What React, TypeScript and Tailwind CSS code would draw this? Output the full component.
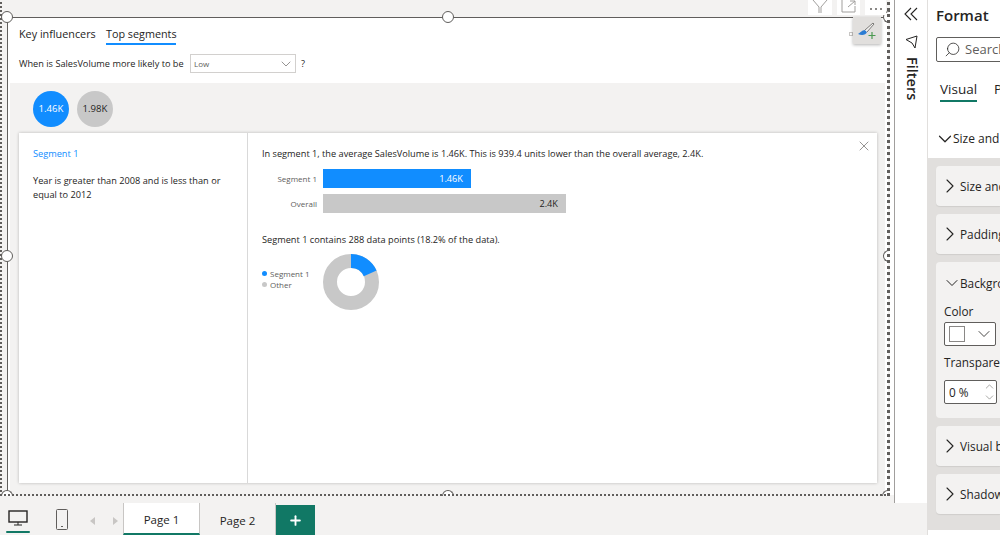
import { ChevronDown, ChevronRight, ChevronUp, X, Search, Plus } from 'lucide-react';

const handleClass = 'absolute h-[12px] w-[12px] rounded-full border border-[#605e5c] bg-white';
const rightHandleClass = 'absolute left-[883px] h-[12px] w-[7px] rounded-l-full border border-r-0 border-[#605e5c] bg-white';
const bottomHandleClass = 'absolute top-[490px] h-[6px] w-[12px] rounded-t-full border border-b-0 border-[#605e5c] bg-white';

function FormatCard({ title }: { title: string }) {
  return (
    <div className="flex h-[40px] shrink-0 items-center rounded-l-[4px] bg-[#f3f2f1] pl-[2px] shadow-[0_1px_1px_rgba(0,0,0,0.08)]">
      <ChevronRight size={24} strokeWidth={1.1} className="-mr-[2px] shrink-0 text-[#252423]" />
      <span className="whitespace-nowrap pt-[1px] text-[11.8px] text-[#252423]">{title}</span>
    </div>
  );
}

export default function App() {
  return (
    <div className="flex h-[535px] w-[1000px] overflow-hidden bg-white font-['Open_Sans',sans-serif] text-[#252423]">
      <div className="flex w-[927px] shrink-0 flex-col">
        <div className="flex h-[503px]">
          {/* report canvas */}
          <div className="relative w-[894px] shrink-0 bg-[#f3f2f1] pl-[7px] pt-[17px]">
            <div className="flex h-[478px] w-[881px] flex-col border-l border-t border-[#605e5c] bg-white">
              <div className="h-[65px] shrink-0 pl-[11px]">
                <div className="flex h-[27px] items-end text-[10.8px]">
                  <div className="h-[26px] w-[87px] whitespace-nowrap pt-[7px] leading-[16px]">Key influencers</div>
                  <div className="h-[26px] w-[70px] whitespace-nowrap border-b-2 border-[#118dff] pt-[7px] leading-[16px]">Top segments</div>
                </div>
                <div className="mt-[9px] flex h-[19px] items-center text-[9.2px]">
                  <span className="w-[171px] whitespace-nowrap">When is SalesVolume more likely to be</span>
                  <div className="flex h-[19px] w-[106px] items-center justify-between border border-[#d2d0ce] pl-[3px] pr-[1px] text-[8px] text-[#605e5c]">
                    Low
                    <ChevronDown size={16} strokeWidth={1} className="text-[#605e5c]" />
                  </div>
                  <span className="ml-[5px]">?</span>
                </div>
              </div>
              <div className="ml-[2px] flex w-[875px] flex-1 flex-col bg-[#f3f2f1] pl-[9px]">
                <div className="flex h-[50px] shrink-0 items-start gap-[8px] pl-[14px] pt-[8px] text-[9.6px]">
                  <div className="flex h-[36px] w-[36px] items-center justify-center rounded-full bg-[#118dff] text-white">1.46K</div>
                  <div className="flex h-[36px] w-[36px] items-center justify-center rounded-full bg-[#c8c8c8]">1.98K</div>
                </div>
                <div className="relative flex h-[350px] w-[858px] bg-white shadow-[0_0_3px_rgba(0,0,0,0.25)]">
                  <div className="w-[229px] shrink-0 border-r border-[#d9d9d9] pl-[14px] pr-[8px] pt-[14px] text-[9.2px] leading-[14px]">
                    <div className="text-[#118dff]">Segment 1</div>
                    <div className="mt-[13px]">Year is greater than 2008 and is less than or equal to 2012</div>
                  </div>
                  <div className="flex-1 pl-[14px] pt-[14px] text-[9.2px] leading-[14px]">
                    <div className="whitespace-nowrap">In segment 1, the average SalesVolume is 1.46K. This is 939.4 units lower than the overall average, 2.4K.</div>
                    <div className="mt-[8px] flex flex-col gap-[6px]">
                      <div className="flex h-[19px] items-center">
                        <span className="w-[56px] pr-[1px] text-right text-[8px] text-[#605e5c]">Segment 1</span>
                        <div className="ml-[5px] flex h-[19px] w-[148px] items-center justify-end bg-[#118dff] pr-[8px] text-white">1.46K</div>
                      </div>
                      <div className="flex h-[19px] items-center">
                        <span className="w-[56px] pr-[1px] text-right text-[8px] text-[#605e5c]">Overall</span>
                        <div className="ml-[5px] flex h-[19px] w-[243px] items-center justify-end bg-[#c8c8c8] pr-[8px]">2.4K</div>
                      </div>
                    </div>
                    <div className="mt-[20px] whitespace-nowrap">Segment 1 contains 288 data points (18.2% of the data).</div>
                    <div className="mt-[7px] flex items-start">
                      <div className="w-[61px] pt-[14px] text-[8px] leading-[11px] text-[#605e5c]">
                        <div className="flex items-center gap-[3px]"><span className="h-[5px] w-[5px] rounded-full bg-[#118dff]" />Segment 1</div>
                        <div className="flex items-center gap-[3px]"><span className="h-[5px] w-[5px] rounded-full bg-[#c8c8c8]" />Other</div>
                      </div>
                      <svg width="56" height="56" viewBox="0 0 56 56">
                        <circle cx="28" cy="28" r="21" fill="none" stroke="#c8c8c8" strokeWidth="14" />
                        <circle cx="28" cy="28" r="21" fill="none" stroke="#118dff" strokeWidth="14" strokeDasharray="24 108" transform="rotate(-90 28 28)" />
                      </svg>
                    </div>
                  </div>
                  <X size={16} strokeWidth={1} className="absolute right-[5px] top-[5px] text-[#605e5c]" />
                </div>
              </div>
            </div>

            {/* selection frame and visual header, sits over the visual */}
            <div className="absolute bottom-[8px] right-0 top-0 w-[4px] bg-white" />
            <div className={`${handleClass} left-[1px] top-[11px]`} />
            <div className={`${handleClass} left-[442px] top-[11px]`} />
            <div className={`${rightHandleClass} top-[11px]`} />
            <div className={`${handleClass} left-[1px] top-[250px]`} />
            <div className={`${rightHandleClass} top-[250px]`} />
            <div className={`${bottomHandleClass} left-[1px]`} />
            <div className={`${bottomHandleClass} left-[442px]`} />
            <div className="absolute left-[882px] top-[490px] h-[6px] w-[8px] rounded-tl-full border-l border-t border-[#605e5c] bg-white" />
            <div className="absolute left-0 top-[-3px] h-[499px] w-[890px] border-2 border-r-[3px] border-dotted border-[#605e5c]" />

            <div className="absolute left-[808px] top-0 flex h-[15px] gap-[5px]">
              <div className="flex w-[24px] justify-center bg-white">
                <svg width="16" height="13" viewBox="0 0 16 13" fill="none" stroke="#a19f9d"><path d="M1 0 L7 7 V13 M15 0 L9 7 V13" /></svg>
              </div>
              <div className="flex w-[23px] justify-center bg-white">
                <svg width="15" height="13" viewBox="0 0 15 13" fill="none" stroke="#a19f9d"><path d="M1 0 V12 H14 V6 M7 7 L14 1 M9 1 H14 V5" /></svg>
              </div>
              <div className="flex w-[21px] items-center justify-center gap-[3px] bg-white pt-[2px]">
                <span className="h-[2px] w-[2px] bg-[#8a8886]" />
                <span className="h-[2px] w-[2px] bg-[#8a8886]" />
                <span className="h-[2px] w-[2px] bg-[#8a8886]" />
              </div>
            </div>
            <div className="absolute left-[849px] top-[32px] h-[4px] w-[4px] border border-[#c8c6c4] bg-white" />
            <div className="absolute left-[853px] top-[17px] flex h-[27px] w-[28px] items-center justify-center bg-[#e1dfdd] shadow-[0_1px_3px_rgba(0,0,0,0.3)]">
              <svg width="20" height="18" viewBox="0 0 20 18" fill="none">
                <path d="M1 12 C3 11 5 8 8 8 L10 10 C9 13 5 14 1 12 Z" fill="#2b7cd3" />
                <path d="M8 8 L16 1 L17 2 L10 10" fill="#f3f2f1" stroke="#605e5c" strokeWidth="0.8" />
                <path d="M15 10 V17 M11.5 13.5 H18.5" stroke="#4c9a52" strokeWidth="1.2" />
              </svg>
            </div>
          </div>

          {/* filters rail */}
          <div className="flex flex-1 flex-col items-center border-l border-[#a19f9d] bg-white pt-[7px]">
            <svg width="14" height="14" viewBox="0 0 14 14" fill="none" stroke="#252423" strokeWidth="1.1"><path d="M7 1 L1 7 L7 13 M13 1 L7 7 L13 13" /></svg>
            <svg className="ml-[1px] mt-[14px]" width="13" height="14" viewBox="0 0 13 14" fill="none" stroke="#252423"><path d="M12 1 L1 4.5 L7 8 L10 13 Z" /></svg>
            <div className="ml-[1px] mt-[8px] text-[14.5px] font-semibold leading-[16px] [writing-mode:vertical-rl]">Filters</div>
          </div>
        </div>

        {/* page tabs */}
        <div className="flex h-[32px] items-end bg-[#f3f2f1]">
          <div className="flex h-[32px] w-[36px] flex-col items-center justify-between pt-[6px]">
            <svg width="20" height="17" viewBox="0 0 20 17" fill="none"><rect x="1" y="2" width="18" height="11" stroke="#252423" strokeWidth="1.4" /><path d="M10 13 V16 M6 16 H14" stroke="#252423" /></svg>
            <div className="mb-[2px] h-[2px] w-[24px] rounded-full bg-[#117865]" />
          </div>
          <div className="flex h-[32px] w-[44px] items-center justify-center pl-[8px]">
            <svg width="14" height="21" viewBox="0 0 14 21" fill="none"><rect x="1.5" y="0.5" width="11" height="20" rx="1" stroke="#605e5c" /><path d="M6 17.5 H8" stroke="#605e5c" /></svg>
          </div>
          <div className="flex h-[32px] w-[43px] items-center justify-center gap-[16px] pl-[4px] pt-[4px]">
            <svg width="6" height="8" viewBox="0 0 6 8" fill="#c8c6c4"><path d="M5 0 L0 4 L5 8 Z" /></svg>
            <svg width="6" height="8" viewBox="0 0 6 8" fill="#c8c6c4"><path d="M1 0 L6 4 L1 8 Z" /></svg>
          </div>
          <div className="flex h-[32px] w-[77px] items-center justify-center border-b-2 border-l border-r border-b-[#117865] border-l-[#c8c6c4] border-r-[#c8c6c4] bg-white pt-[4px] text-[11.5px]">Page 1</div>
          <div className="flex h-[32px] w-[76px] items-center justify-center border-r border-[#c8c6c4] pt-[4px] text-[11.5px]">Page 2</div>
          <div className="flex h-[30px] w-[39px] items-center justify-center bg-[#117865]">
            <Plus size={15} strokeWidth={3} className="text-white" />
          </div>
        </div>
      </div>

      {/* format pane */}
      <div className="flex flex-1 flex-col overflow-hidden border-l border-[#e1dfdd]">
        <div className="h-[158px] shrink-0 bg-white pl-[8px]">
          <div className="pt-[4px] text-[15px] font-semibold leading-[22px]">Format</div>
          <div className="mt-[11px] flex h-[25px] w-[80px] items-center gap-[4px] rounded-[2px] border border-[#605e5c] pl-[7px] text-[13px]">
            <Search size={17} strokeWidth={1.1} className="-scale-x-100 shrink-0 text-[#252423]" />
            <span className="whitespace-nowrap pt-[1px] text-[#605e5c]">Search</span>
          </div>
          <div className="mt-[16px] flex h-[24px] pl-[4px] text-[13.5px] font-medium">
            <div className="w-[38px] border-b-2 border-[#117865] text-center leading-[23px]">Visual</div>
            <div className="ml-[17px] leading-[23px]">P</div>
          </div>
          <div className="-ml-[2px] mt-[28px] flex items-center whitespace-nowrap text-[12px] font-medium">
            <ChevronDown size={22} strokeWidth={1.3} className="-my-[4px] -mr-[3px] shrink-0" />
            Size and
          </div>
        </div>
        <div className="flex flex-1 flex-col gap-[8px] overflow-hidden bg-[#e1dfdd] pl-[8px] pt-[8px]">
          <FormatCard title="Size and" />
          <FormatCard title="Padding" />
          <div className="flex h-[156px] shrink-0 flex-col rounded-l-[4px] bg-[#f3f2f1] pl-[8px] pt-[13px] text-[11.8px] leading-[16px]">
            <div className="-ml-[2px] flex items-center whitespace-nowrap">
              <ChevronDown size={20} strokeWidth={1.2} className="-my-[2px] shrink-0" />
              <span className="-ml-[2px]">Background</span>
            </div>
            <div className="mt-[12px]">Color</div>
            <div className="mt-[3px] flex h-[24px] w-[52px] items-center justify-between rounded-[2px] border border-[#605e5c] bg-white pl-[4px] pr-[1px]">
              <span className="h-[16px] w-[16px] border border-[#8a8886] bg-white" />
              <ChevronDown size={20} strokeWidth={1} />
            </div>
            <div className="mt-[8px] whitespace-nowrap">Transparency</div>
            <div className="mt-[10px] flex h-[24px] w-[53px] items-center justify-between rounded-[2px] border border-[#605e5c] bg-white pl-[4px]">
              0 %
              <div className="flex flex-col text-[#605e5c]">
                <ChevronUp size={13} strokeWidth={1} className="-mb-[2px]" />
                <ChevronDown size={13} strokeWidth={1} />
              </div>
            </div>
          </div>
          <FormatCard title="Visual b" />
          <FormatCard title="Shadow" />
        </div>
        <div className="h-[5px] shrink-0 bg-white" />
      </div>
    </div>
  );
}
